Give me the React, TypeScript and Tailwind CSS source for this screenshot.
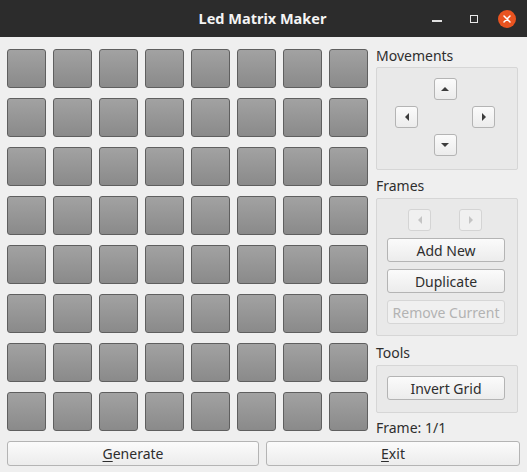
import React from "react";

const font = { fontFamily: '"Noto Sans", "Open Sans", sans-serif' };

const Arrow = ({ dir, disabled }: { dir: "up" | "down" | "left" | "right"; disabled?: boolean }) => {
  const pts: Record<string, string> = {
    up: "0,4 4,0 8,4",
    down: "0,0 4,4 8,0",
    left: "4,0 0,4 4,8",
    right: "0,0 4,4 0,8",
  };
  const vertical = dir === "up" || dir === "down";
  return (
    <svg
      width={vertical ? 8 : 4}
      height={vertical ? 4 : 8}
      viewBox={vertical ? "0 0 8 4" : "0 0 4 8"}
    >
      <polygon points={pts[dir]} fill={disabled ? "#c4c4c4" : "#3c3c3c"} />
    </svg>
  );
};

const ArrowButton = ({ dir, disabled }: { dir: "up" | "down" | "left" | "right"; disabled?: boolean }) => (
  <div
    className={`w-[23px] h-[22px] rounded-[3px] border flex items-center justify-center ${
      disabled ? "border-[#d4d4d4] bg-[#f0f0f0]" : "border-[#b4b4b4] bg-gradient-to-b from-[#fbfbfb] to-[#ececec]"
    }`}
  >
    <Arrow dir={dir} disabled={disabled} />
  </div>
);

const Button = ({ label, disabled, className = "" }: { label: React.ReactNode; disabled?: boolean; className?: string }) => (
  <div
    className={`h-[24px] rounded-[3px] border flex items-center justify-center text-[14px] ${
      disabled
        ? "border-[#d6d6d6] bg-[#f0f0f0] text-[#b3b3b3]"
        : "border-[#b4b4b4] bg-gradient-to-b from-[#fbfbfb] to-[#ececec] text-[#2e2e2e]"
    } ${className}`}
  >
    {label}
  </div>
);

const Cell = () => (
  <div className="w-[39px] h-[39px] rounded-[3px] border border-[#5f5f5f] bg-gradient-to-b from-[#a2a2a2] to-[#8a8a8a]" />
);

function App() {
  const cells = Array.from({ length: 64 });
  return (
    <div className="w-[527px] h-[472px] bg-[#efefef] flex flex-col overflow-hidden" style={font}>
      {/* title bar */}
      <div className="h-[37px] bg-[#2c2c2c] flex items-center relative shrink-0">
        <div className="flex-1 text-center text-[#f4f4f4] font-bold text-[14.5px] pr-[2px]">Led Matrix Maker</div>
        <div className="absolute right-0 top-0 h-[37px] flex items-center">
          <div className="w-[10px] h-[2px] bg-[#e0e0e0] mt-[5px] mr-[28px]" />
          <div className="w-[8px] h-[8px] border-[1.5px] border-[#e8e8e8] mr-[20px]" />
          <div className="w-[18px] h-[18px] rounded-full bg-[#e95420] flex items-center justify-center mr-[11px]">
            <svg width="8" height="8" viewBox="0 0 8 8">
              <path d="M1 1L7 7M7 1L1 7" stroke="#fff" strokeWidth="1.5" strokeLinecap="round" />
            </svg>
          </div>
        </div>
      </div>

      <div className="flex items-start px-[7px] pt-[12px] h-[394px] shrink-0">
        {/* matrix */}
        <div className="grid grid-cols-[repeat(8,39px)] grid-rows-[repeat(8,39px)] gap-x-[7px] gap-y-[10px] w-[361px]">
          {cells.map((_, i) => (
            <Cell key={i} />
          ))}
        </div>

        {/* side panel */}
        <div className="ml-[8px] w-[142px] flex flex-col text-[#2e2e2e] text-[14px]">
          <div className="h-[16px] leading-[16px] -mt-[1px]">Movements</div>
          <div className="mt-[3px] h-[103px] rounded-[2px] border border-[#d6d6d6] bg-[#e9e9e9]">
            <div className="flex justify-center pt-[10px] pr-[4px]">
              <ArrowButton dir="up" />
            </div>
            <div className="flex justify-between pl-[18px] pr-[22px] mt-[6px]">
              <ArrowButton dir="left" />
              <ArrowButton dir="right" />
            </div>
            <div className="flex justify-center mt-[6px] pr-[4px]">
              <ArrowButton dir="down" />
            </div>
          </div>

          <div className="h-[16px] leading-[16px] mt-[8px]">Frames</div>
          <div className="mt-[4px] h-[138px] rounded-[2px] border border-[#d6d6d6] bg-[#e9e9e9] pl-[10px] pr-[12px] pt-[10px]">
            <div className="flex justify-between pl-[21px] pr-[23px]">
              <ArrowButton dir="left" disabled />
              <ArrowButton dir="right" disabled />
            </div>
            <Button label="Add New" className="mt-[7px]" />
            <Button label="Duplicate" className="mt-[7px]" />
            <Button label="Remove Current" disabled className="mt-[7px]" />
          </div>

          <div className="h-[16px] leading-[16px] mt-[9px]">Tools</div>
          <div className="mt-[4px] h-[48px] rounded-[2px] border border-[#d6d6d6] bg-[#e9e9e9] pl-[10px] pr-[12px] pt-[10px]">
            <Button label="Invert Grid" />
          </div>

          <div className="h-[16px] leading-[16px] mt-[7px]">Frame: 1/1</div>
        </div>
      </div>

      {/* bottom buttons */}
      <div className="flex gap-[7px] px-[7px] mt-[10px]">
        <Button
          className="w-[252px] h-[25px]"
          label={
            <span>
              <span className="underline underline-offset-2">G</span>enerate
            </span>
          }
        />
        <Button
          className="w-[254px] h-[25px]"
          label={
            <span>
              <span className="underline underline-offset-2">E</span>xit
            </span>
          }
        />
      </div>
    </div>
  );
}

export default App;
